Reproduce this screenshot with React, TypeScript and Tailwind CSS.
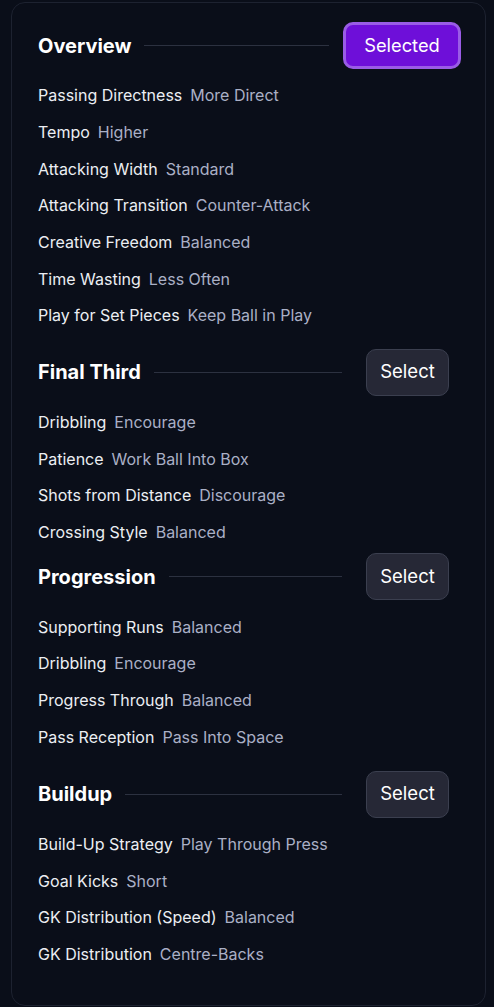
import React from "react";

type Row = [string, string];
type Section = { title: string; selected: boolean; rows: Row[]; mt: string };

const sections: Section[] = [
  {
    title: "Overview",
    selected: true,
    mt: "mt-0",
    rows: [
      ["Passing Directness", "More Direct"],
      ["Tempo", "Higher"],
      ["Attacking Width", "Standard"],
      ["Attacking Transition", "Counter-Attack"],
      ["Creative Freedom", "Balanced"],
      ["Time Wasting", "Less Often"],
      ["Play for Set Pieces", "Keep Ball in Play"],
    ],
  },
  {
    title: "Final Third",
    selected: false,
    mt: "mt-[15px]",
    rows: [
      ["Dribbling", "Encourage"],
      ["Patience", "Work Ball Into Box"],
      ["Shots from Distance", "Discourage"],
      ["Crossing Style", "Balanced"],
    ],
  },
  {
    title: "Progression",
    selected: false,
    mt: "mt-[3px]",
    rows: [
      ["Supporting Runs", "Balanced"],
      ["Dribbling", "Encourage"],
      ["Progress Through", "Balanced"],
      ["Pass Reception", "Pass Into Space"],
    ],
  },
  {
    title: "Buildup",
    selected: false,
    mt: "mt-[16px]",
    rows: [
      ["Build-Up Strategy", "Play Through Press"],
      ["Goal Kicks", "Short"],
      ["GK Distribution (Speed)", "Balanced"],
      ["GK Distribution", "Centre-Backs"],
    ],
  },
];

export default function App() {
  return (
    <div
      className="min-h-[1007px] w-[494px] bg-[#0a0e19] pl-[11px] pr-[8px] pt-[2px] pb-[2px]"
      style={{ fontFamily: "Inter, 'Noto Sans', sans-serif" }}
    >
      <div className="rounded-[14px] border border-[#1d2230] bg-[#0a0e19] pl-[26px] pr-[24px] pt-[19px] pb-[33px]">
        {sections.map((s) => (
          <div key={s.title} className={s.mt}>
            <div className="flex h-[47px] items-center">
              <h2 className="text-[20px] font-bold text-white">{s.title}</h2>
              <div className="ml-[13px] h-px flex-1 bg-[#2c3140]" />
              {s.selected ? (
                <button className="ml-[14px] flex h-[47px] w-[118px] items-center justify-center rounded-[10px] border-[3px] border-[#9a5ce6] bg-[#6e0fd9] text-[18.3px] text-white">
                  Selected
                </button>
              ) : (
                <button className="ml-[24px] mr-[12px] flex h-[47px] w-[83px] items-center justify-center rounded-[10px] border border-[#3b3f4f] bg-[#262836] text-[18.5px] text-white">
                  Select
                </button>
              )}
            </div>
            <div className="mt-[8px] flex flex-col">
              {s.rows.map(([k, v], i) => (
                <div key={i} className="flex h-[36.67px] items-center text-[16px]">
                  <span className="text-[#eceef3]">{k}</span>
                  <span className="ml-[8px] text-[#aab0c6]">{v}</span>
                </div>
              ))}
            </div>
          </div>
        ))}
      </div>
    </div>
  );
}
